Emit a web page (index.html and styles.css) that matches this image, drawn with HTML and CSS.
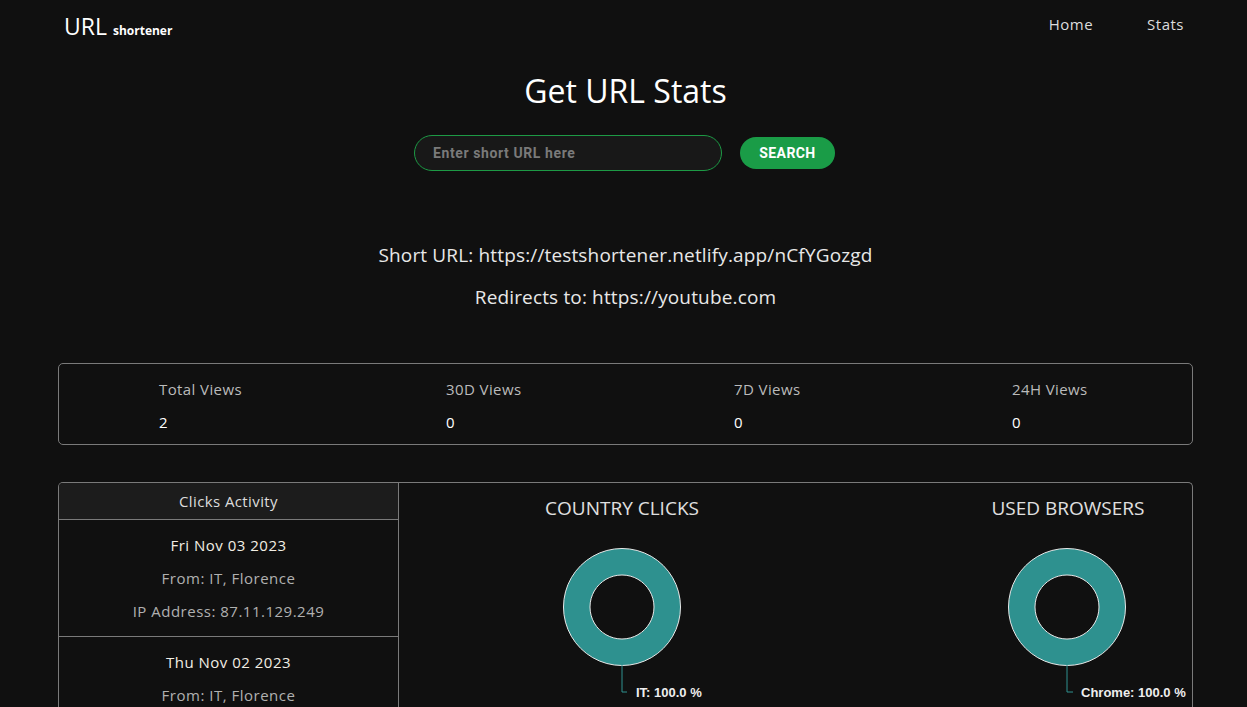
FILE: index.html
```html
<!DOCTYPE html>
<html lang="en">
<head>
<meta charset="utf-8">
<title>URL shortener - Stats</title>
<link rel="stylesheet" href="styles.css">
</head>
<body>
<header class="navbar">
  <a class="brand" href="#">URL <small>shortener</small></a>
  <nav class="nav-links">
    <a href="#">Home</a>
    <a href="#">Stats</a>
  </nav>
</header>

<main class="page">
  <h1 class="page-title">Get URL Stats</h1>
  <form class="search">
    <input class="search-input" type="text" placeholder="Enter short URL here">
    <button class="search-btn" type="button">SEARCH</button>
  </form>

  <section class="url-info">
    <p>Short URL: https://testshortener.netlify.app/nCfYGozgd</p>
    <p>Redirects to: https://youtube.com</p>
  </section>

  <section class="views">
    <div class="view-item"><span class="view-label">Total Views</span><span class="view-value">2</span></div>
    <div class="view-item"><span class="view-label">30D Views</span><span class="view-value">0</span></div>
    <div class="view-item"><span class="view-label">7D Views</span><span class="view-value">0</span></div>
    <div class="view-item"><span class="view-label">24H Views</span><span class="view-value">0</span></div>
  </section>

  <section class="details">
    <aside class="activity">
      <div class="activity-head">Clicks Activity</div>
      <div class="activity-entry">
        <div class="entry-date">Fri Nov 03 2023</div>
        <div class="entry-info">From: IT, Florence</div>
        <div class="entry-info">IP Address: 87.11.129.249</div>
      </div>
      <div class="activity-entry">
        <div class="entry-date">Thu Nov 02 2023</div>
        <div class="entry-info">From: IT, Florence</div>
        <div class="entry-info">IP Address: 87.11.129.249</div>
      </div>
    </aside>
    <div class="charts">
      <div class="chart">
        <h2 class="chart-title">COUNTRY CLICKS</h2>
        <svg class="chart-svg" width="446" height="190" viewBox="0 0 446 190">
          <path class="donut" fill-rule="evenodd" d="M223 29.5a58.5 58.5 0 1 0 0.001 0Z M223 56a32 32 0 1 1 -0.001 0Z"/>
          <polyline class="leader" points="223,146 223,173 228,173"/>
          <text class="chart-label" x="237" y="177.5">IT: 100.0 %</text>
        </svg>
      </div>
      <div class="chart">
        <h2 class="chart-title">USED BROWSERS</h2>
        <svg class="chart-svg" width="446" height="190" viewBox="0 0 446 190">
          <path class="donut" fill-rule="evenodd" d="M222 29.5a58.5 58.5 0 1 0 0.001 0Z M222 56a32 32 0 1 1 -0.001 0Z"/>
          <polyline class="leader" points="222,146 222,173 228,173"/>
          <text class="chart-label" x="236" y="177.5">Chrome: 100.0 %</text>
        </svg>
      </div>
    </div>
  </section>
</main>
</body>
</html>
```

FILE: styles.css
```css
* { box-sizing: border-box; }

html, body {
  margin: 0;
  padding: 0;
  background: #101010;
  color: #eee;
  font-family: "Open Sans", "Noto Sans", sans-serif;
  height: 100%;
  overflow: hidden;
}

a { color: inherit; text-decoration: none; }

.navbar {
  display: flex;
  align-items: center;
  justify-content: space-between;
  height: 52px;
  padding: 0 63px 0 64px;
}

.brand {
  font-size: 23px;
  color: #fff;
  line-height: 1;
}

.brand small {
  font-size: 12px;
  font-weight: 700;
}

.nav-links {
  display: flex;
  gap: 54px;
  font-size: 15px;
  letter-spacing: 0.5px;
  color: #ddd;
  margin-top: -4px;
}

.page {
  padding: 0 54px 0 58px;
}

.page-title {
  margin: 17px 0 0;
  text-align: center;
  font-size: 32px;
  font-weight: 400;
  line-height: 44px;
  color: #fff;
}

.search {
  display: flex;
  justify-content: center;
  align-items: center;
  gap: 18px;
  margin-top: 22px;
  padding-right: 2px;
}

.search-input {
  width: 308px;
  height: 36px;
  border-radius: 18px;
  border: 1px solid #1d9a45;
  background: #181818;
  padding: 0 18px;
  font-family: "Roboto", "Liberation Sans", sans-serif;
  font-weight: 700;
  font-size: 14px;
  letter-spacing: 0.6px;
  color: #ddd;
  outline: none;
}

.search-input::placeholder { color: #7a7a7a; }

.search-btn {
  width: 95px;
  height: 32px;
  border: none;
  border-radius: 16px;
  background: #1a9c47;
  color: #fff;
  font-family: "Roboto", "Liberation Sans", sans-serif;
  font-weight: 700;
  font-size: 14px;
  letter-spacing: 0.4px;
}

.url-info {
  margin-top: 63px;
  text-align: center;
  font-size: 19px;
  letter-spacing: 0.15px;
  color: #e8e8e8;
}

.url-info p {
  margin: 0;
  line-height: 42px;
}

.views {
  margin-top: 45px;
  height: 82px;
  border: 1px solid #7a7a7a;
  border-radius: 5px;
  display: grid;
  grid-template-columns: 287px 288px 278px 1fr;
  padding: 14px 0 0 100px;
}

.view-item {
  display: flex;
  flex-direction: column;
}

.view-label {
  font-size: 15px;
  letter-spacing: 0.4px;
  color: #bbb;
  line-height: 22px;
}

.view-value {
  font-size: 15px;
  color: #fff;
  line-height: 22px;
  margin-top: 11px;
}

.details {
  margin-top: 37px;
  height: 260px;
  border: 1px solid #7a7a7a;
  border-bottom: none;
  border-radius: 5px 5px 0 0;
  display: flex;
  overflow: hidden;
}

.activity {
  width: 340px;
  flex: none;
  border-right: 1px solid #7a7a7a;
  text-align: center;
}

.activity-head {
  height: 37px;
  line-height: 36px;
  background: #1c1c1c;
  border-bottom: 1px solid #7a7a7a;
  font-size: 15px;
  letter-spacing: 0.4px;
  color: #ddd;
}

.activity-entry {
  padding: 9px 0 8px;
  border-bottom: 1px solid #7a7a7a;
}

.entry-date,
.entry-info {
  line-height: 33px;
  font-size: 15px;
  letter-spacing: 0.5px;
}

.entry-date { color: #f2eee4; }
.entry-info { color: #b0b0b0; }

.charts {
  display: flex;
  flex: none;
}

.chart {
  width: 446px;
  flex: none;
}

.chart-title {
  margin: 14px 0 0;
  height: 22px;
  line-height: 22px;
  text-align: center;
  font-size: 19px;
  font-weight: 500;
  color: #e0e0e0;
}

.chart-svg { display: block; }

.donut {
  fill: #2e918f;
  stroke: #e8e8e8;
  stroke-width: 1;
}

.leader {
  fill: none;
  stroke: #2e918f;
  stroke-width: 1;
}

.chart-label {
  font-family: "Liberation Sans", Arial, sans-serif;
  font-weight: 700;
  font-size: 13px;
  fill: #eee;
}
```
